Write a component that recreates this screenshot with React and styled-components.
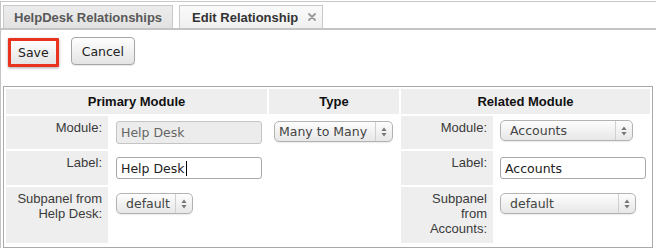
import React from 'react';
import styled, { createGlobalStyle } from 'styled-components';

const GlobalStyle = createGlobalStyle`
  html, body {
    margin: 0;
    padding: 0;
    background: #fff;
  }
  * { box-sizing: border-box; }
`;

const Page = styled.div`
  margin-top: 1px;
  min-height: 247px;
  border-top: 1px solid #c8c8c8;
  border-left: 1px solid #c4c4c4;
  font-family: "Liberation Sans", Arial, sans-serif;
  color: #333;
`;

const TabBar = styled.div`
  display: flex;
  gap: 6px;
  padding: 3px 0 0 2px;
  border-bottom: 2px solid #c4c4c4;
`;

const Tab = styled.div`
  height: 23px;
  display: flex;
  align-items: center;
  gap: 10px;
  padding: ${p => (p.$active ? '0 6px 0 12px' : '0 10px')};
  border: 1px solid #c9c9c9;
  border-bottom: none;
  background: ${p => (p.$active
    ? 'linear-gradient(#fafafa, #f0f0f0)'
    : 'linear-gradient(#ececec, #e2e2e2)')};
  color: ${p => (p.$active ? '#333' : '#585858')};
  font-size: 13px;
  font-weight: bold;
  white-space: nowrap;
`;

const CloseIcon = () => (
  <svg width="8" height="8" viewBox="0 0 8 8">
    <path d="M1 1 L7 7 M7 1 L1 7" stroke="#9a9a9a" strokeWidth="1.8" strokeLinecap="round" />
  </svg>
);

const Toolbar = styled.div`
  display: flex;
  align-items: flex-start;
  gap: 12px;
  padding: 7px 0 0 7px;
`;

const Button = styled.button`
  height: ${p => (p.$highlight ? '29px' : '28px')};
  margin-top: ${p => (p.$highlight ? '1px' : '0')};
  padding: 0 ${p => (p.$highlight ? '7px' : '10px')};
  border: ${p => (p.$highlight ? '3px solid #e8341f' : '1px solid #a6a6a6')};
  border-radius: ${p => (p.$highlight ? '1px' : '4px')};
  background: linear-gradient(#fefefe, #e4e4e4);
  box-shadow: ${p => (p.$highlight
    ? '0 1px 3px rgba(0,0,0,0.35)'
    : '0 1px 1px rgba(0,0,0,0.1)')};
  font-family: "DejaVu Sans", Verdana, sans-serif;
  font-size: 12.5px;
  color: #222;
`;

const Table = styled.div`
  display: grid;
  grid-template-columns: 102px 157px 130px 92px 155px;
  grid-template-rows: 25px 33px 34px 56px;
  gap: 2px;
  width: 650px;
  margin: 19px 0 0 2px;
  padding: 2px 2px 4px;
  border: 1px solid #a9a9a9;
`;

const Head = styled.div`
  grid-column: span ${p => p.$span || 1};
  display: flex;
  align-items: center;
  justify-content: center;
  background: #eeeeee;
  color: #111;
  font-size: 13px;
  font-weight: bold;
`;

const Label = styled.div`
  background: #eeeeee;
  padding: 4px 6px 0 6px;
  text-align: right;
  font-size: 13px;
  line-height: 15px;
  color: #3a3a3a;
`;

const Field = styled.div`
  display: flex;
  align-items: flex-start;
  padding: ${p => p.$top || 5}px 0 0 ${p => p.$left || 6}px;
`;

const TextBox = styled.div`
  width: ${p => p.$w}px;
  height: ${p => p.$h || 22}px;
  display: flex;
  align-items: center;
  padding-left: 4px;
  border: 1px solid ${p => (p.$disabled ? '#c4c4c4' : '#a8a8a8')};
  border-radius: 3px;
  background: ${p => (p.$disabled ? '#ececec' : '#fff')};
  color: ${p => (p.$disabled ? '#666' : '#222')};
  font-family: "DejaVu Sans", Verdana, sans-serif;
  font-size: 12.5px;
  white-space: nowrap;
`;

const Caret = styled.span`
  display: inline-block;
  width: 1px;
  height: 15px;
  margin-left: 1px;
  background: #000;
`;

const Select = styled.div`
  width: ${p => p.$w}px;
  height: ${p => p.$h || 21}px;
  display: flex;
  align-items: center;
  border: 1px solid #b3b3b3;
  border-radius: 5px;
  background: linear-gradient(#fdfdfd, #e7e7e7);
  box-shadow: 0 1px 1px rgba(0,0,0,0.08);
  font-family: "DejaVu Sans", Verdana, sans-serif;
  font-size: 12.5px;
  color: #444;
  white-space: nowrap;
`;

const SelectText = styled.span`
  flex: 1;
  padding-left: ${p => p.$pad || 9}px;
`;

const ArrowBox = styled.span`
  width: 17px;
  height: 100%;
  display: flex;
  align-items: center;
  justify-content: center;
  border-left: 1px solid #d0d0d0;
`;

const Arrows = () => (
  <ArrowBox>
    <svg width="6" height="10" viewBox="0 0 6 10">
      <path d="M3 0.5 L5.6 4 L0.4 4 Z" fill="#777" />
      <path d="M3 9.5 L5.6 6 L0.4 6 Z" fill="#777" />
    </svg>
  </ArrowBox>
);

function Dropdown({ w, h, pad, children }) {
  return (
    <Select $w={w} $h={h}>
      <SelectText $pad={pad}>{children}</SelectText>
      <Arrows />
    </Select>
  );
}

export default function App() {
  return (
    <>
      <GlobalStyle />
      <Page>
        <TabBar>
          <Tab>HelpDesk Relationships</Tab>
          <Tab $active>
            Edit Relationship <CloseIcon />
          </Tab>
        </TabBar>

        <Toolbar>
          <Button $highlight>Save</Button>
          <Button>Cancel</Button>
        </Toolbar>

        <Table>
          <Head $span={2}>Primary Module</Head>
          <Head>Type</Head>
          <Head $span={2}>Related Module</Head>

          <Label>Module:</Label>
          <Field>
            <TextBox $w={146} $h={23} $disabled>Help Desk</TextBox>
          </Field>
          <Field $left={5}>
            <Dropdown w={119} pad={4}>Many to Many</Dropdown>
          </Field>
          <Label>Module:</Label>
          <Field $left={5} $top={4}>
            <Dropdown w={133}>Accounts</Dropdown>
          </Field>

          <Label>Label:</Label>
          <Field $top={6}>
            <TextBox $w={146}>Help Desk<Caret /></TextBox>
          </Field>
          <div />
          <Label>Label:</Label>
          <Field $left={5} $top={6}>
            <TextBox $w={146}>Accounts</TextBox>
          </Field>

          <Label>Subpanel from Help Desk:</Label>
          <Field $top={6}>
            <Dropdown w={77}>default</Dropdown>
          </Field>
          <div />
          <Label>Subpanel from Accounts:</Label>
          <Field $left={5} $top={6}>
            <Dropdown w={136}>default</Dropdown>
          </Field>
        </Table>
      </Page>
    </>
  );
}
